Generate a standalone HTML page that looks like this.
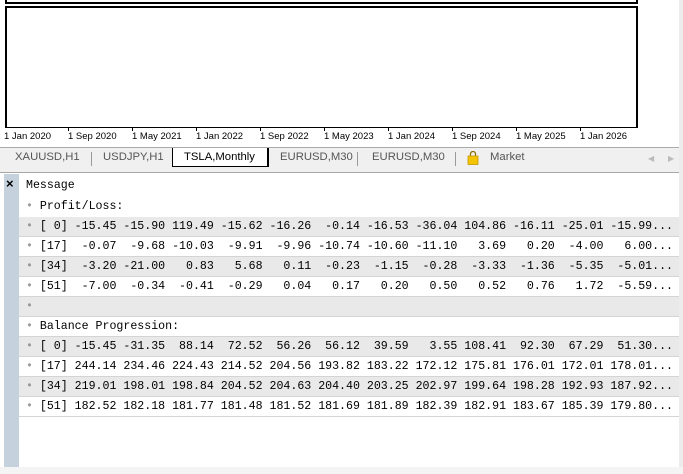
<!DOCTYPE html>
<html><head><meta charset="utf-8"><style>
*{margin:0;padding:0;box-sizing:border-box}
body{width:683px;height:474px;background:#fff;position:relative;overflow:hidden;font-family:"Liberation Sans",sans-serif}
.abs{position:absolute}
.lbl{position:absolute;top:131px;font-size:9.5px;color:#000;white-space:nowrap}
.tick{position:absolute;top:127px;width:1px;height:4px;background:#000}
.tab{position:absolute;top:151px;font-size:11.3px;color:#555;white-space:nowrap}
.sep{position:absolute;top:152px;width:1px;height:14px;background:#999}
.row{position:absolute;left:19px;width:660px;height:20px;font-family:"Liberation Mono",monospace;font-size:11.6px;line-height:20px;white-space:pre;color:#000;border-bottom:1px solid #d4d4d4}
.g{background:#e9e9e9}
.b{color:#999}
</style></head><body>
<div class="abs" style="left:5px;top:-2px;width:633px;height:6px;border:2px solid #000;border-top:none"></div>
<div class="abs" style="left:5px;top:6px;width:633px;height:122px;border:2px solid #000;border-bottom-width:1px"></div>
<div class="tick" style="left:68px"></div><div class="tick" style="left:132px"></div><div class="tick" style="left:196px"></div><div class="tick" style="left:260px"></div><div class="tick" style="left:324px"></div><div class="tick" style="left:388px"></div><div class="tick" style="left:452px"></div><div class="tick" style="left:516px"></div><div class="tick" style="left:580px"></div>
<div class="lbl" style="left:4px">1 Jan 2020</div><div class="lbl" style="left:68px">1 Sep 2020</div><div class="lbl" style="left:132px">1 May 2021</div><div class="lbl" style="left:196px">1 Jan 2022</div><div class="lbl" style="left:260px">1 Sep 2022</div><div class="lbl" style="left:324px">1 May 2023</div><div class="lbl" style="left:388px">1 Jan 2024</div><div class="lbl" style="left:452px">1 Sep 2024</div><div class="lbl" style="left:516px">1 May 2025</div><div class="lbl" style="left:580px">1 Jan 2026</div>
<div class="abs" style="left:679px;top:0;width:4px;height:474px;background:#ececec"></div>
<div class="abs" style="left:0;top:147px;width:679px;height:26px;background:#f0f0f0;border-top:1px solid #aaa;border-bottom:1px solid #a8a8a8"></div>
<div class="abs" style="left:172px;top:148px;width:97px;height:19px;background:#fff;border:1px solid #000;border-top:none;border-right-width:2px"></div>
<div class="tab" style="left:15px">XAUUSD,H1</div><div class="sep" style="left:91px"></div>
<div class="tab" style="left:103px">USDJPY,H1</div>
<div class="tab" style="left:184px;color:#000">TSLA,Monthly</div>
<div class="tab" style="left:280px">EURUSD,M30</div><div class="sep" style="left:357px"></div>
<div class="tab" style="left:372px">EURUSD,M30</div><div class="sep" style="left:455px"></div>
<svg class="abs" style="left:467px;top:151px" width="12" height="14" viewBox="0 0 12 14"><path d="M3.5 5V3a2.5 2.5 0 0 1 5 0v2" fill="none" stroke="#8a6d00" stroke-width="1.2"/><rect x="1" y="5" width="10" height="8.5" fill="#f5c400" stroke="#c49a00" stroke-width=".8"/></svg>
<div class="tab" style="left:490px">Market</div>
<div class="tab" style="left:648px;color:#bbb;font-size:8px;top:154px">◀</div>
<div class="tab" style="left:668px;color:#bbb;font-size:8px;top:154px">▶</div>
<div class="abs" style="left:4px;top:174px;width:15px;height:293px;background:#c5d2de"></div>
<div class="abs" style="left:6px;top:176px;font-size:13px;font-weight:bold;color:#000">×</div>
<div class="abs" style="left:0;top:467px;width:683px;height:7px;background:#f4f4f4"></div>
<div class="row" style="top:176px;border:none;left:26px">Message</div>
<div class="row" style="top:197px;border:none"> <span class="b">•</span> Profit/Loss:</div>
<div class="row g" style="top:217px"> <span class="b">•</span> [ 0] -15.45 -15.90 119.49 -15.62 -16.26  -0.14 -16.53 -36.04 104.86 -16.11 -25.01 -15.99...</div>
<div class="row" style="top:237px"> <span class="b">•</span> [17]  -0.07  -9.68 -10.03  -9.91  -9.96 -10.74 -10.60 -11.10   3.69   0.20  -4.00   6.00...</div>
<div class="row g" style="top:257px"> <span class="b">•</span> [34]  -3.20 -21.00   0.83   5.68   0.11  -0.23  -1.15  -0.28  -3.33  -1.36  -5.35  -5.01...</div>
<div class="row" style="top:277px"> <span class="b">•</span> [51]  -7.00  -0.34  -0.41  -0.29   0.04   0.17   0.20   0.50   0.52   0.76   1.72  -5.59...</div>
<div class="row g" style="top:297px"> <span class="b">•</span></div>
<div class="row" style="top:317px"> <span class="b">•</span> Balance Progression:</div>
<div class="row g" style="top:337px"> <span class="b">•</span> [ 0] -15.45 -31.35  88.14  72.52  56.26  56.12  39.59   3.55 108.41  92.30  67.29  51.30...</div>
<div class="row" style="top:357px"> <span class="b">•</span> [17] 244.14 234.46 224.43 214.52 204.56 193.82 183.22 172.12 175.81 176.01 172.01 178.01...</div>
<div class="row g" style="top:377px"> <span class="b">•</span> [34] 219.01 198.01 198.84 204.52 204.63 204.40 203.25 202.97 199.64 198.28 192.93 187.92...</div>
<div class="row" style="top:397px"> <span class="b">•</span> [51] 182.52 182.18 181.77 181.48 181.52 181.69 181.89 182.39 182.91 183.67 185.39 179.80...</div>
</body></html>
